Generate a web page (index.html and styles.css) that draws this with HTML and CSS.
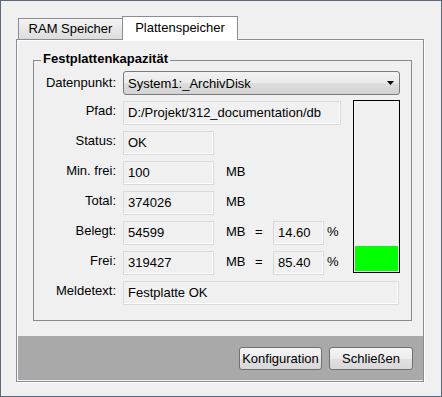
FILE: index.html
```html
<!DOCTYPE html>
<html lang="de">
<head>
<meta charset="utf-8">
<title>Plattenspeicher</title>
<link rel="stylesheet" href="styles.css">
</head>
<body>
<div class="window">
  <div class="tabs">
    <div class="tab tab-ram">RAM Speicher</div>
    <div class="tab tab-active">Plattenspeicher</div>
  </div>
  <div class="panel">
    <fieldset class="group">
      <legend class="group-title">Festplattenkapazität</legend>
      <div class="row">
        <span class="lbl lbl-combo">Datenpunkt:</span>
        <div class="combo">
          <span class="combo-text">System1:_ArchivDisk</span>
          <svg class="combo-arrow" width="7" height="4" viewBox="0 0 7 4"><path d="M0 0H7L3.5 4Z" fill="#000"/></svg>
        </div>
      </div>
      <div class="mid">
        <div class="rows">
          <div class="row">
            <span class="lbl">Pfad:</span>
            <div class="field w-path">D:/Projekt/312_documentation/db</div>
          </div>
          <div class="row">
            <span class="lbl">Status:</span>
            <div class="field w-num">OK</div>
          </div>
          <div class="row">
            <span class="lbl">Min. frei:</span>
            <div class="field w-num">100</div>
            <span class="unit">MB</span>
          </div>
          <div class="row">
            <span class="lbl">Total:</span>
            <div class="field w-num">374026</div>
            <span class="unit">MB</span>
          </div>
          <div class="row">
            <span class="lbl">Belegt:</span>
            <div class="field w-num">54599</div>
            <span class="unit">MB</span>
            <span class="eq">=</span>
            <div class="field w-pct">14.60</div>
            <span class="pct">%</span>
          </div>
          <div class="row">
            <span class="lbl">Frei:</span>
            <div class="field w-num">319427</div>
            <span class="unit">MB</span>
            <span class="eq">=</span>
            <div class="field w-pct">85.40</div>
            <span class="pct">%</span>
          </div>
        </div>
        <div class="bar">
          <div class="bar-fill" style="height:14.6%"></div>
        </div>
      </div>
      <div class="row row-msg">
        <span class="lbl">Meldetext:</span>
        <div class="field w-msg">Festplatte OK</div>
      </div>
    </fieldset>
    <div class="footer">
      <button class="btn btn-config" type="button">Konfiguration</button>
      <button class="btn btn-close" type="button">Schließen</button>
    </div>
  </div>
</div>
</body>
</html>
```

FILE: styles.css
```css
html, body {
  margin: 0;
  padding: 0;
  background: #f0f0f0;
}

body {
  font-family: "Liberation Sans", Arial, sans-serif;
  font-size: 13px;
  color: #000;
}

.window {
  width: 442px;
  height: 397px;
  box-sizing: border-box;
  border: 1px solid #5a6879;
  background: #f0f0f0;
}

/* Tabs */
.tabs {
  display: flex;
  align-items: flex-end;
  height: 23px;
  margin: 15px 0 0 17px;
}

.tab {
  box-sizing: border-box;
  border: 1px solid #898c95;
  border-bottom: none;
  text-align: center;
  white-space: nowrap;
}

.tab-ram {
  width: 104px;
  height: 21px;
  line-height: 20px;
  border-right: none;
  background: linear-gradient(#f3f3f3, #dcdcdc);
}

.tab-active {
  width: 116px;
  height: 24px;
  line-height: 21px;
  margin-bottom: -1px;
  background: #fff;
  position: relative;
  z-index: 1;
}

/* Panel */
.panel {
  box-sizing: border-box;
  width: 408px;
  height: 343px;
  margin-left: 15px;
  border: 1px solid #898c95;
  box-shadow: inset 1px 1px 0 #fff, 1px 1px 0 #fff;
  display: flex;
  flex-direction: column;
}

.group {
  box-sizing: border-box;
  width: 379px;
  min-inline-size: 0;
  margin: 12px 0 0 16px;
  padding: 2px 11px 15px 7px;
  border: 1px solid #8a8a8a;
}

.group-title {
  padding: 0 2px 3px;
  font-weight: bold;
  line-height: 14px;
}

.row {
  display: flex;
  align-items: center;
  height: 24px;
}

.rows .row + .row {
  margin-top: 6px;
}

.lbl {
  flex: none;
  width: 75px;
  margin-right: 7px;
  text-align: right;
  white-space: nowrap;
  padding-bottom: 5px;
}

.lbl-combo {
  padding-bottom: 2px;
}

.combo {
  box-sizing: border-box;
  width: 277px;
  height: 24px;
  display: flex;
  align-items: center;
  padding-left: 4px;
  border: 1px solid #7a7a7a;
  border-radius: 3px;
  background: linear-gradient(#f2f2f2 0%, #ebebeb 50%, #dddddd 51%, #d3d3d3 100%);
}

.combo-text {
  flex: 1;
}

.combo-arrow {
  margin-right: 5px;
  display: block;
}

.mid {
  display: flex;
  align-items: flex-start;
  margin-top: 6px;
}

.rows {
  flex: 1;
}

.field {
  box-sizing: border-box;
  height: 24px;
  line-height: 22px;
  padding-left: 4px;
  border: 1px solid #dadada;
  box-shadow: inset -1px -1px 0 #fff;
  background: #f0f0f0;
  white-space: nowrap;
  overflow: hidden;
}

.w-path { width: 218px; }
.w-num { width: 91px; }
.w-pct { width: 51px; }
.w-msg { width: 276px; }

.unit {
  width: 29px;
  margin-left: 12px;
  padding-bottom: 4px;
}

.eq {
  width: 18px;
  padding-bottom: 4px;
}

.pct {
  margin-left: 3px;
  padding-bottom: 4px;
}

.bar {
  box-sizing: border-box;
  flex: none;
  width: 47px;
  height: 173px;
  margin-top: -1px;
  padding: 1px;
  border: 1px solid #000;
  background: #f0f0f0;
  display: flex;
  flex-direction: column;
  justify-content: flex-end;
}

.bar-fill {
  background: #00ff00;
}

.row-msg {
  margin-top: 6px;
}

/* Footer */
.footer {
  box-sizing: border-box;
  height: 44px;
  margin: 15px 0 1px 1px;
  padding: 11px 10px 0 0;
  background: #a9a9a9;
  display: flex;
  justify-content: flex-end;
  align-items: flex-start;
  gap: 7px;
}

.btn {
  box-sizing: border-box;
  height: 23px;
  padding: 0;
  border: 1px solid #707070;
  border-radius: 3px;
  background: linear-gradient(#f4f4f4 0%, #ececec 50%, #e0e0e0 51%, #d8d8d8 100%);
  font-family: "Liberation Sans", Arial, sans-serif;
  font-size: 13px;
  color: #000;
}

.btn-config { width: 83px; }
.btn-close { width: 84px; }
```
